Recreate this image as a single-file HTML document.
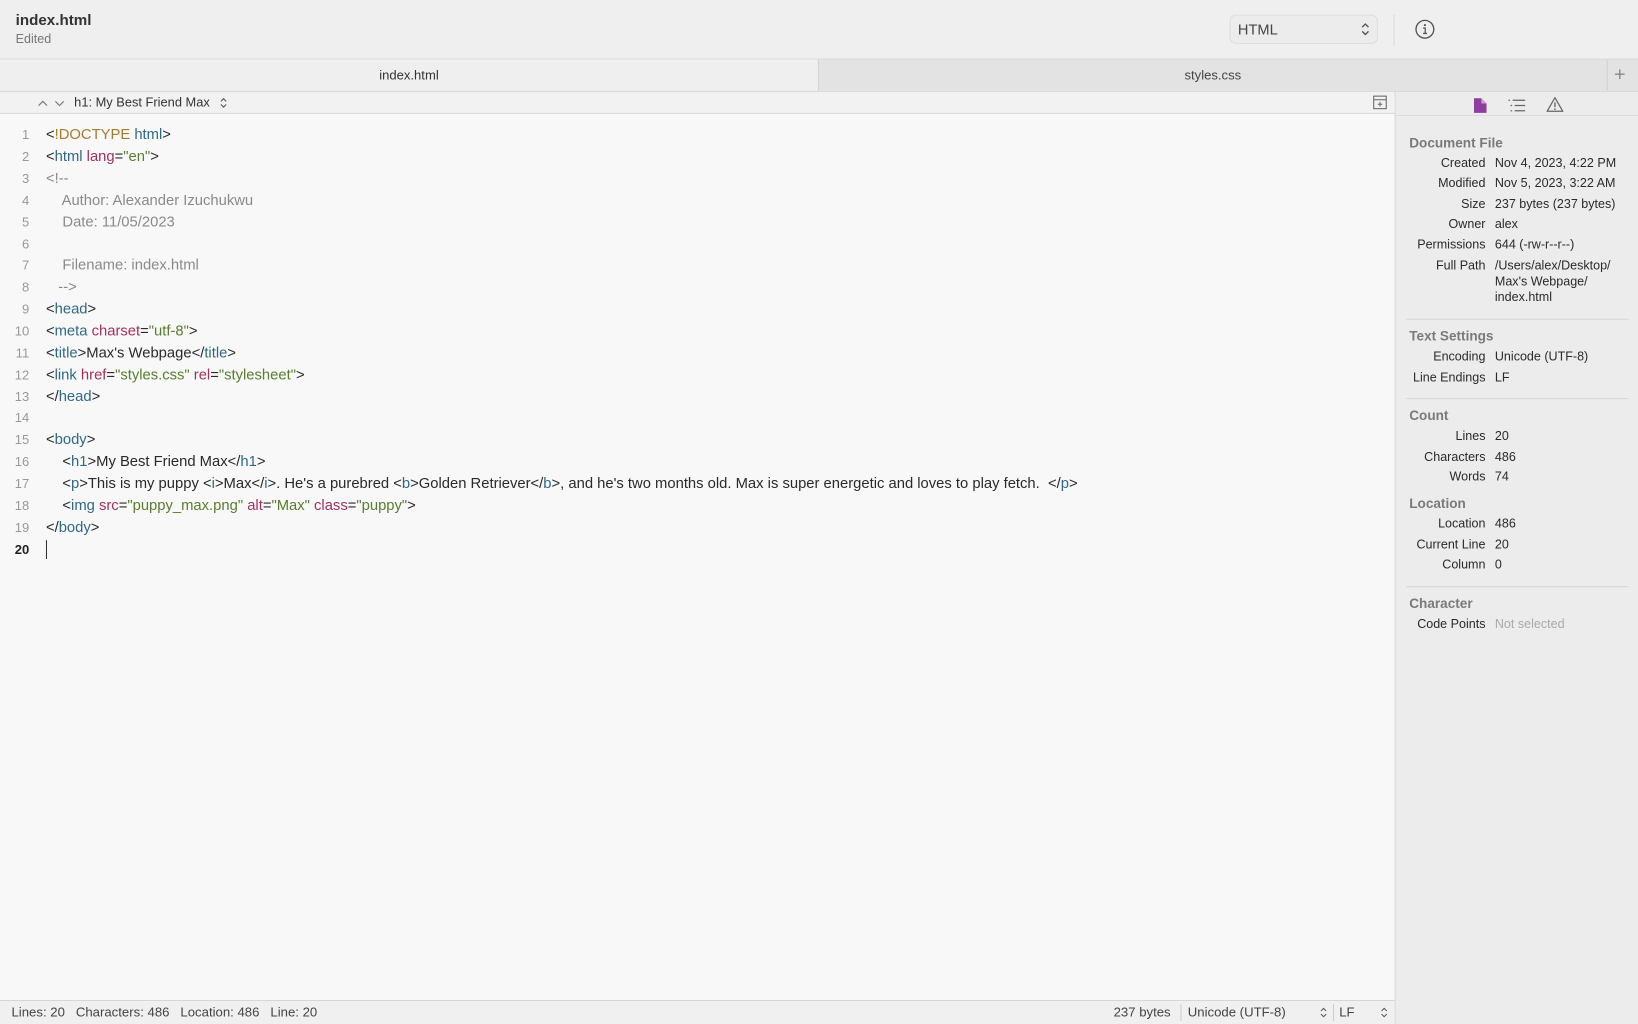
<!DOCTYPE html>
<html><head><meta charset="utf-8"><style>
html,body{margin:0;padding:0;width:1638px;height:1024px;overflow:hidden;background:#f8f8f8}
#w{position:absolute;left:0;top:0;width:1568px;height:980px;transform:scale(1.044643,1.044898);transform-origin:0 0;font-family:"Liberation Sans",Arial,sans-serif;color:#262626}
.a{position:absolute}
#title{left:0;top:0;width:1568px;height:56px;background:#efefef}
#tabs{left:0;top:56px;width:1568px;height:31px;background:#e3e3e3;border-top:1px solid #dcdcdc;box-sizing:border-box}
#crumb{left:0;top:87px;width:1335px;height:22px;background:#f2f2f2;border-bottom:1px solid #dadada;border-top:1px solid #dadada;box-sizing:border-box}
#side{left:1335px;top:87px;width:233px;height:893px;background:#ececec;border-left:1px solid #d8d8d8;border-top:1px solid #dadada;box-sizing:border-box}
#status{left:0;top:957px;width:1335px;height:23px;background:#f0f0f0;border-top:1px solid #d6d6d6;box-sizing:border-box;font-size:12.6px;color:#444}
.ln{position:absolute;left:0;width:28px;text-align:right;font-size:12.5px;color:#999}
.cl{position:absolute;left:44px;font-size:14.17px;white-space:pre;color:#2a2a2a}
.t{color:#2f6a83}.at{color:#a2305e}.s{color:#587d2e}.d{color:#a57c2c}.c{color:#8a8a8a}
.lab{position:absolute;width:86px;text-align:right;font-size:12px;color:#2a2a2a;left:0;line-height:15px}
.val{position:absolute;left:95px;font-size:12px;color:#2a2a2a;line-height:15px}
.h{position:absolute;left:13px;font-size:13px;font-weight:bold;color:#7a7a7a}
.sep{position:absolute;left:10px;width:213px;height:1px;background:#d6d6d6}
</style></head><body><div id="w">
<div class="a" id="title">
 <div class="a" style="left:15px;top:12px;font-size:14.5px;font-weight:bold;color:#333">index.html</div>
 <div class="a" style="left:15px;top:30px;font-size:12px;color:#777">Edited</div>
 <div class="a" style="left:1177px;top:14px;width:142px;height:28px;border:1px solid #dcdcdc;border-radius:6px;background:#ececec;box-sizing:border-box"></div>
 <div class="a" style="left:1185px;top:20px;font-size:14px;color:#444">HTML</div>
 <svg class="a" style="left:1302px;top:20px" width="10" height="16"><path d="M2 6 L5 3 L8 6 M2 10 L5 13 L8 10" fill="none" stroke="#555" stroke-width="1.3"/></svg>
 <div class="a" style="left:1334px;top:14px;width:1px;height:30px;background:#d8d8d8"></div>
 <svg class="a" style="left:1354px;top:18px" width="20" height="20"><circle cx="10" cy="10" r="8.5" fill="none" stroke="#555" stroke-width="1.3"/><circle cx="10" cy="6" r="1" fill="#555"/><path d="M8.3 8.8 H10.3 V14 M8.3 14 H12" fill="none" stroke="#555" stroke-width="1.2"/></svg>
</div>
<div class="a" id="tabs">
 <div class="a" style="left:0;top:0;width:783px;height:30px;background:#efefef;border-right:1px solid #d4d4d4"></div>
 <div class="a" style="left:0;top:8px;width:783px;text-align:center;font-size:12.5px;color:#333">index.html</div>
 <div class="a" style="left:784px;top:8px;width:754px;text-align:center;font-size:12.5px;color:#444">styles.css</div>
 <div class="a" style="left:1538px;top:0;width:1px;height:30px;background:#d0d0d0"></div>
 <div class="a" style="left:1545px;top:4px;font-size:19px;color:#888;font-weight:300">+</div>
</div>
<div class="a" id="crumb">
 <svg class="a" style="left:35px;top:5px" width="32" height="12"><path d="M2 8 L6 4 L10 8 M18 4 L22 8 L26 4" fill="none" stroke="#777" stroke-width="1.1"/></svg>
 <div class="a" style="left:71px;top:3px;font-size:12.3px;color:#333">h1: My Best Friend Max</div>
 <svg class="a" style="left:210px;top:4px" width="8" height="13"><path d="M1.5 5 L4 2.5 L6.5 5 M1.5 8 L4 10.5 L6.5 8" fill="none" stroke="#555" stroke-width="1.1"/></svg>
 <svg class="a" style="left:1314px;top:3px" width="14" height="14"><rect x="1" y="1" width="12" height="12" fill="none" stroke="#666" stroke-width="1"/><path d="M1 4.5 H13 M7 6.5 V11 M4.8 8.8 H9.2" stroke="#666" stroke-width="1"/></svg>
</div>
<div class="a" id="side">
 <svg class="a" style="left:74px;top:5px" width="14" height="16"><path d="M1 1 H8 L13 6 V15 H1 Z" fill="#8e3f9e"/><path d="M8 1 V6 H13" fill="#c9a2d2"/></svg>
 <svg class="a" style="left:107px;top:6px" width="18" height="14"><path d="M1 2 H2.5 M5 2 H17 M3 7 H4.5 M7 7 H17 M3 12 H4.5 M7 12 H17" stroke="#666" stroke-width="1.2"/></svg>
 <svg class="a" style="left:144px;top:4px" width="17" height="16"><path d="M8.5 1.5 L16 14.5 H1 Z" fill="none" stroke="#666" stroke-width="1.2" stroke-linejoin="round"/><path d="M8.5 6 V10.5" stroke="#666" stroke-width="1.3"/><circle cx="8.5" cy="12.4" r=".8" fill="#666"/></svg>
 <div class="a" style="left:0;top:22px;width:233px;height:1px;background:#dcdcdc"></div>
 <div class="h" style="top:41px">Document File</div>
 <div class="lab" style="top:61px">Created</div><div class="val" style="top:61px">Nov 4, 2023, 4:22 PM</div>
 <div class="lab" style="top:80px">Modified</div><div class="val" style="top:80px">Nov 5, 2023, 3:22 AM</div>
 <div class="lab" style="top:100px">Size</div><div class="val" style="top:100px">237 bytes (237 bytes)</div>
 <div class="lab" style="top:119px">Owner</div><div class="val" style="top:119px">alex</div>
 <div class="lab" style="top:139px">Permissions</div><div class="val" style="top:139px">644 (-rw-r--r--)</div>
 <div class="lab" style="top:159px">Full Path</div><div class="val" style="top:159px">/Users/alex/Desktop/<br>Max's Webpage/<br>index.html</div>
 <div class="sep" style="top:217px"></div>
 <div class="h" style="top:226px">Text Settings</div>
 <div class="lab" style="top:246px">Encoding</div><div class="val" style="top:246px">Unicode (UTF-8)</div>
 <div class="lab" style="top:266px">Line Endings</div><div class="val" style="top:266px">LF</div>
 <div class="sep" style="top:293px"></div>
 <div class="h" style="top:302px">Count</div>
 <div class="lab" style="top:322px">Lines</div><div class="val" style="top:322px">20</div>
 <div class="lab" style="top:342px">Characters</div><div class="val" style="top:342px">486</div>
 <div class="lab" style="top:361px">Words</div><div class="val" style="top:361px">74</div>
 <div class="h" style="top:386px">Location</div>
 <div class="lab" style="top:406px">Location</div><div class="val" style="top:406px">486</div>
 <div class="lab" style="top:426px">Current Line</div><div class="val" style="top:426px">20</div>
 <div class="lab" style="top:445px">Column</div><div class="val" style="top:445px">0</div>
 <div class="sep" style="top:473px"></div>
 <div class="h" style="top:482px">Character</div>
 <div class="lab" style="top:502px">Code Points</div><div class="val" style="top:502px;color:#aaa">Not selected</div>
</div>
<div class="a" style="left:0;top:110px;width:1335px">
<div class="ln" style="top:12px">1</div><div class="cl" style="top:11px">&lt;<span class="d">!DOCTYPE</span> <span class="t">html</span>&gt;</div>
<div class="ln" style="top:33px">2</div><div class="cl" style="top:32px">&lt;<span class="t">html</span> <span class="at">lang</span>=<span class="s">"en"</span>&gt;</div>
<div class="ln" style="top:54px">3</div><div class="cl c" style="top:53px">&lt;!--</div>
<div class="ln" style="top:75px">4</div><div class="cl c" style="top:74px">    Author: Alexander Izuchukwu</div>
<div class="ln" style="top:96px">5</div><div class="cl c" style="top:95px">    Date: 11/05/2023</div>
<div class="ln" style="top:117px">6</div>
<div class="ln" style="top:137px">7</div><div class="cl c" style="top:136px">    Filename: index.html</div>
<div class="ln" style="top:158px">8</div><div class="cl c" style="top:157px">   --&gt;</div>
<div class="ln" style="top:179px">9</div><div class="cl" style="top:178px">&lt;<span class="t">head</span>&gt;</div>
<div class="ln" style="top:200px">10</div><div class="cl" style="top:199px">&lt;<span class="t">meta</span> <span class="at">charset</span>=<span class="s">"utf-8"</span>&gt;</div>
<div class="ln" style="top:221px">11</div><div class="cl" style="top:220px">&lt;<span class="t">title</span>&gt;Max's Webpage&lt;/<span class="t">title</span>&gt;</div>
<div class="ln" style="top:242px">12</div><div class="cl" style="top:241px">&lt;<span class="t">link</span> <span class="at">href</span>=<span class="s">"styles.css"</span> <span class="at">rel</span>=<span class="s">"stylesheet"</span>&gt;</div>
<div class="ln" style="top:263px">13</div><div class="cl" style="top:262px">&lt;/<span class="t">head</span>&gt;</div>
<div class="ln" style="top:283px">14</div>
<div class="ln" style="top:304px">15</div><div class="cl" style="top:303px">&lt;<span class="t">body</span>&gt;</div>
<div class="ln" style="top:325px">16</div><div class="cl" style="top:324px">    &lt;<span class="t">h1</span>&gt;My Best Friend Max&lt;/<span class="t">h1</span>&gt;</div>
<div class="ln" style="top:346px">17</div><div class="cl" style="top:345px">    &lt;<span class="t">p</span>&gt;This is my puppy &lt;<span class="t">i</span>&gt;Max&lt;/<span class="t">i</span>&gt;. He's a purebred &lt;<span class="t">b</span>&gt;Golden Retriever&lt;/<span class="t">b</span>&gt;, and he's two months old. Max is super energetic and loves to play fetch.  &lt;/<span class="t">p</span>&gt;</div>
<div class="ln" style="top:367px">18</div><div class="cl" style="top:366px">    &lt;<span class="t">img</span> <span class="at">src</span>=<span class="s">"puppy_max.png"</span> <span class="at">alt</span>=<span class="s">"Max"</span> <span class="at">class</span>=<span class="s">"puppy"</span>&gt;</div>
<div class="ln" style="top:388px">19</div><div class="cl" style="top:387px">&lt;/<span class="t">body</span>&gt;</div>
<div class="ln" style="top:409px;color:#222;font-weight:bold">20</div>
<div class="a" style="left:44px;top:407px;width:1px;height:18px;background:#333"></div>
</div>
<div class="a" id="status">
 <div class="a" style="left:11px;top:4px">Lines: 20&nbsp;&nbsp; Characters: 486&nbsp;&nbsp; Location: 486&nbsp;&nbsp; Line: 20</div>
 <div class="a" style="left:1066px;top:4px">237 bytes</div>
 <div class="a" style="left:1130px;top:3px;width:1px;height:16px;background:#ccc"></div>
 <div class="a" style="left:1137px;top:4px">Unicode (UTF-8)</div>
 <svg class="a" style="left:1263px;top:5px" width="8" height="12"><path d="M1.5 4.5 L4 2 L6.5 4.5 M1.5 7.5 L4 10 L6.5 7.5" fill="none" stroke="#555" stroke-width="1"/></svg>
 <div class="a" style="left:1276px;top:3px;width:1px;height:16px;background:#ccc"></div>
 <div class="a" style="left:1282px;top:4px">LF</div>
 <svg class="a" style="left:1321px;top:5px" width="8" height="12"><path d="M1.5 4.5 L4 2 L6.5 4.5 M1.5 7.5 L4 10 L6.5 7.5" fill="none" stroke="#555" stroke-width="1"/></svg>
</div>
</div></body></html>
